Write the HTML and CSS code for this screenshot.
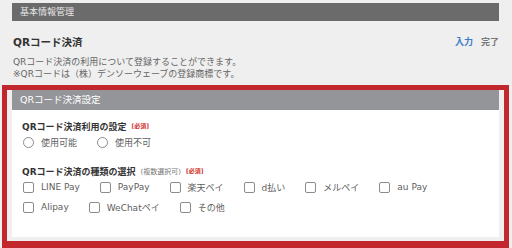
FILE: index.html
```html
<!DOCTYPE html>
<html lang="ja">
<head>
<meta charset="utf-8">
<link rel="stylesheet" href="styles.css">
</head>
<body>
<div class="page">
  <div class="topbar">基本情報管理</div>
  <div class="title-row">
    <div class="title">QRコード決済</div>
    <div class="links"><span class="link-on">入力</span><span class="link-off">完了</span></div>
  </div>
  <div class="desc">
    <p>QRコード決済の利用について登録することができます。</p>
    <p>※QRコードは（株）デンソーウェーブの登録商標です。</p>
  </div>
  <div class="section">
    <div class="section-head">QRコード決済設定</div>
    <div class="section-body">
      <div class="group">
        <div class="label">QRコード決済利用の設定<span class="req">[必須]</span></div>
        <div class="options">
          <span class="opt"><span class="radio"></span>使用可能</span>
          <span class="opt"><span class="radio"></span>使用不可</span>
        </div>
      </div>
      <div class="group group-2">
        <div class="label">QRコード決済の種類の選択<span class="note">(複数選択可)</span><span class="req">[必須]</span></div>
        <div class="options">
          <span class="opt"><span class="check"></span>LINE Pay</span>
          <span class="opt"><span class="check"></span>PayPay</span>
          <span class="opt"><span class="check"></span>楽天ペイ</span>
          <span class="opt"><span class="check"></span>d払い</span>
          <span class="opt"><span class="check"></span>メルペイ</span>
          <span class="opt"><span class="check"></span>au Pay</span>
        </div>
        <div class="options options-2">
          <span class="opt"><span class="check"></span>Alipay</span>
          <span class="opt"><span class="check"></span>WeChatペイ</span>
          <span class="opt"><span class="check"></span>その他</span>
        </div>
      </div>
    </div>
  </div>
  <div class="highlight"></div>
</div>
</body>
</html>
```
FILE: styles.css
```css
* { box-sizing: border-box; }
html, body { margin: 0; padding: 0; }
body {
  background: #efefef;
  width: 512px;
  height: 248px;
  overflow: hidden;
}
.page {
  position: relative;
  padding: 3px 13px 0 12px;
  height: 248px;
  font-family: "DejaVu Sans", "Noto Sans CJK JP", sans-serif;
  color: #444;
}
.topbar {
  height: 18px;
  line-height: 18px;
  background: #6b6b6b;
  color: #e8e8e8;
  font-size: 9px;
  padding-left: 8px;
}
.title-row {
  display: flex;
  justify-content: space-between;
  align-items: center;
  margin-top: 13px;
  height: 14px;
}
.title {
  font-size: 10.5px;
  font-weight: bold;
  color: #333;
  padding-left: 1px;
}
.links {
  display: flex;
  gap: 8px;
  font-size: 9px;
  font-weight: bold;
}
.link-on { color: #3d7cc9; }
.link-off { color: #777; }
.desc {
  margin-top: 8px;
  padding-left: 1px;
  font-size: 9px;
  line-height: 12px;
  color: #666;
}
.desc p { margin: 0; }
.section { margin-top: 10px; }
.section-head {
  height: 20px;
  line-height: 20px;
  background: #939598;
  color: #fff;
  font-size: 9.5px;
  padding-left: 8px;
}
.section-body {
  background: #fff;
  height: 127px;
  padding: 11px 0 0 10px;
}
.label {
  font-size: 9px;
  font-weight: bold;
  line-height: 12px;
  color: #333;
  display: flex;
  align-items: center;
}
.req {
  color: #d0312d;
  font-size: 6px;
  font-weight: bold;
  margin-left: 5px;
  position: relative;
  top: -1px;
}
.note {
  color: #777;
  font-size: 7px;
  font-weight: normal;
  margin-left: 5px;
}
.options {
  display: flex;
  column-gap: 20px;
  margin-top: 2px;
  padding-left: 1px;
  height: 14px;
  align-items: center;
}
.options-2 { margin-top: 6px; }
.group-2 { margin-top: 17px; }
.opt {
  display: flex;
  align-items: center;
  gap: 7px;
  font-size: 9px;
  color: #606060;
}
.radio {
  width: 11px;
  height: 11px;
  border: 1.5px solid #8c8c8c;
  border-radius: 50%;
  background: #fff;
}
.check {
  width: 11px;
  height: 11px;
  border: 1px solid #8c8c8c;
  border-radius: 2px;
  background: #fff;
}
.highlight {
  position: absolute;
  left: 2px;
  top: 85px;
  width: 507px;
  height: 163px;
  border-style: solid;
  border-color: #c1272d;
  border-width: 5px 5px 7px 5px;
  pointer-events: none;
}
```
